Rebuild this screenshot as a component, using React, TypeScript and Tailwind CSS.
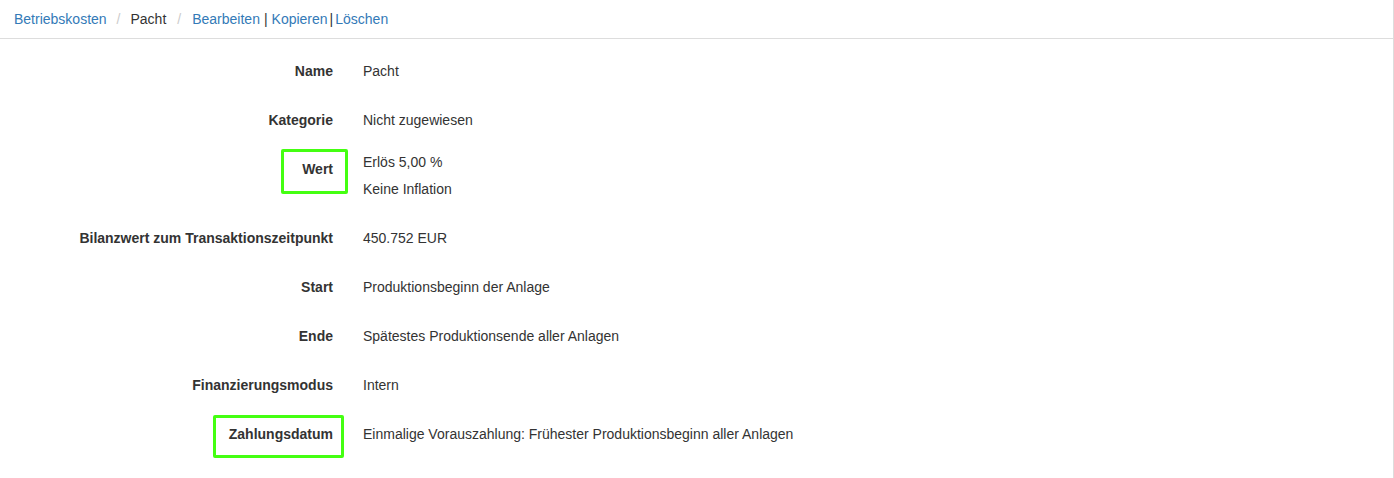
const rows: { label: string; values: string[]; marked?: "wert" | "zahlung" }[] = [
  { label: "Name", values: ["Pacht"] },
  { label: "Kategorie", values: ["Nicht zugewiesen"] },
  { label: "Wert", values: ["Erlös 5,00 %", "Keine Inflation"], marked: "wert" },
  { label: "Bilanzwert zum Transaktionszeitpunkt", values: ["450.752 EUR"] },
  { label: "Start", values: ["Produktionsbeginn der Anlage"] },
  { label: "Ende", values: ["Spätestes Produktionsende aller Anlagen"] },
  { label: "Finanzierungsmodus", values: ["Intern"] },
  {
    label: "Zahlungsdatum",
    values: ["Einmalige Vorauszahlung: Frühester Produktionsbeginn aller Anlagen"],
    marked: "zahlung",
  },
];

function DetailRow({ label, values, marked }: (typeof rows)[number]) {
  const multi = values.length > 1;
  return (
    <div className="relative flex">
      <div className="w-[333px] shrink-0 pt-[14px] pb-[15px] text-right text-[14px] font-bold leading-[20px] text-[#333]">
        {label}
      </div>
      <div
        className={
          multi
            ? "ml-[30px] pt-[4px] pb-[11px] text-[14px] leading-[27px] text-[#333]"
            : "ml-[30px] pt-[14px] pb-[15px] text-[14px] leading-[20px] text-[#333]"
        }
      >
        {values.map((v) => (
          <div key={v}>{v}</div>
        ))}
      </div>
      {marked === "wert" ? (
        <div className="pointer-events-none absolute left-[281px] top-[4px] h-[45px] w-[67px] rounded-[2px] border-[3px] border-[#44ff11]" />
      ) : null}
      {marked === "zahlung" ? (
        <div className="pointer-events-none absolute left-[213px] top-[5px] h-[43px] w-[131px] rounded-[2px] border-[3px] border-[#44ff11]" />
      ) : null}
    </div>
  );
}

export default function App() {
  return (
    <div
      className="min-h-[478px] w-[1394px] border-r border-[#ddd] bg-white"
      style={{ fontFamily: '"Liberation Sans", Arial, sans-serif' }}
    >
      <header className="flex h-[39px] items-center border-b border-[#ddd] pl-[14px] text-[14px] leading-[20px]">
        <a className="text-[#337ab7]" href="#">
          Betriebskosten
        </a>
        <span className="px-[10px] text-[#ccc]">/</span>
        <span className="text-[#333]">Pacht</span>
        <span className="px-[11px] text-[#ccc]">/</span>
        <a className="text-[#337ab7]" href="#">
          Bearbeiten
        </a>
        <span className="px-[4px] text-[#333]">|</span>
        <a className="text-[#337ab7]" href="#">
          Kopieren
        </a>
        <span className="px-[2px] text-[#333]">|</span>
        <a className="text-[#337ab7]" href="#">
          Löschen
        </a>
      </header>

      <div className="pt-[8px]">
        {rows.map((row) => (
          <DetailRow key={row.label} {...row} />
        ))}
      </div>
    </div>
  );
}
